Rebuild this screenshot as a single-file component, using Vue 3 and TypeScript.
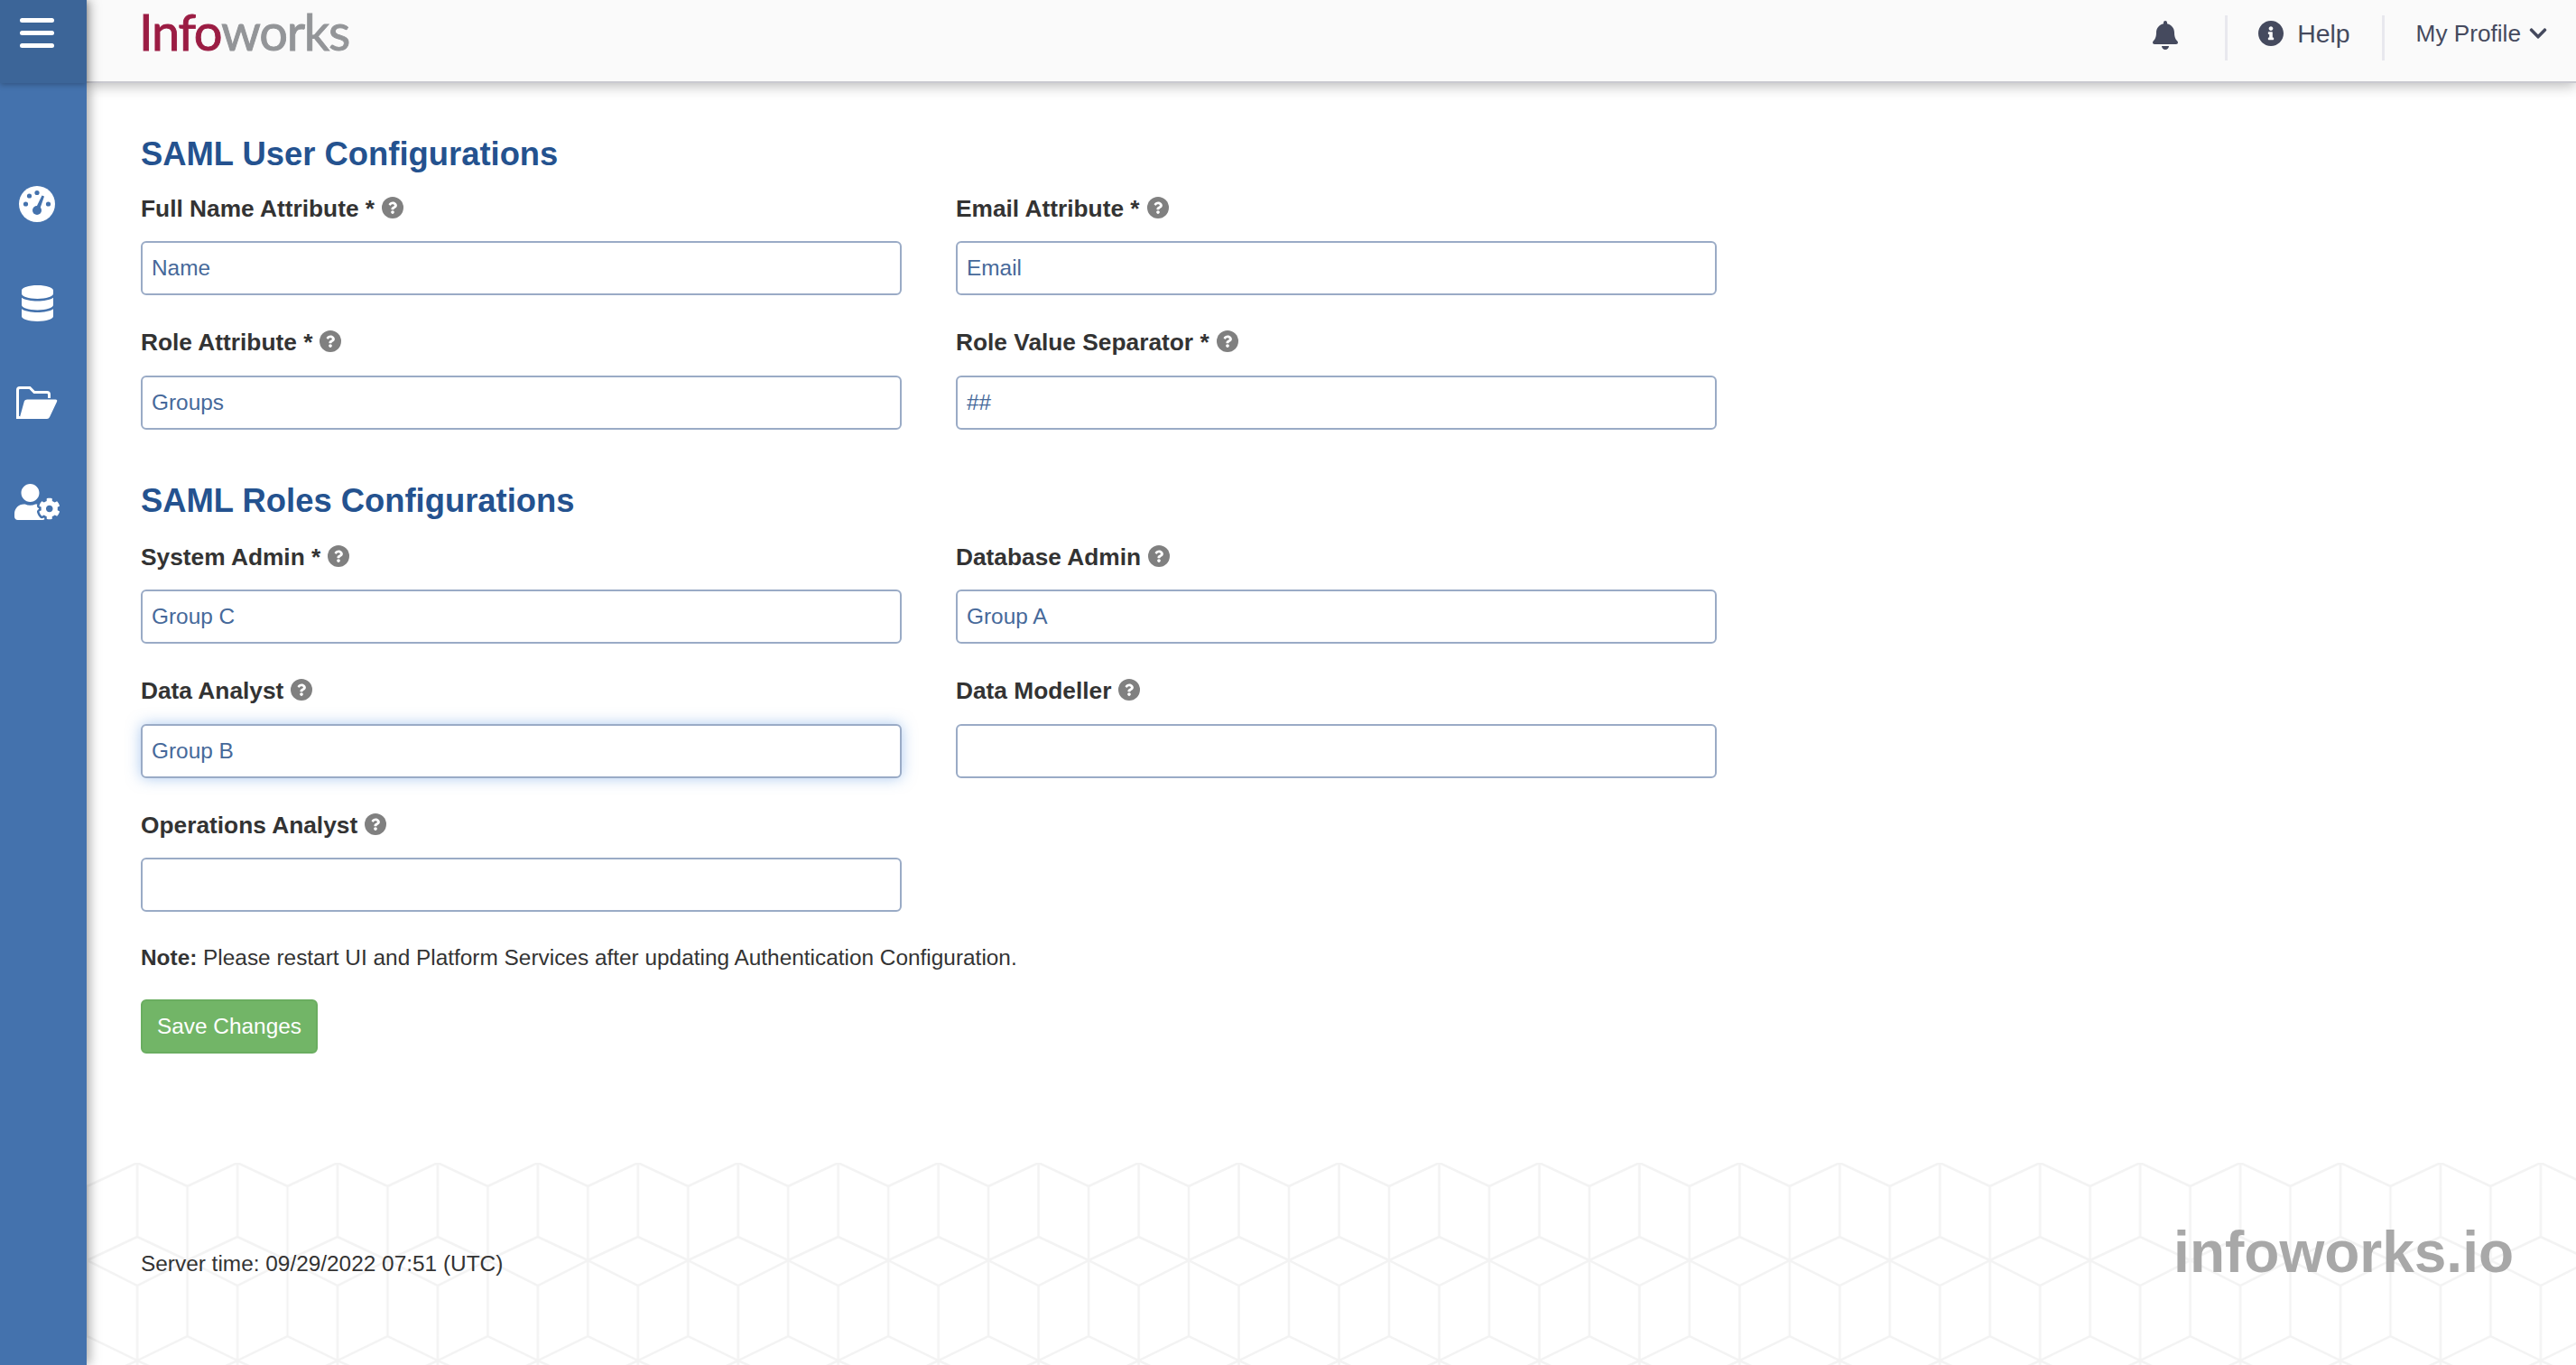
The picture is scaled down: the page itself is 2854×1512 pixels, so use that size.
<script setup lang="ts">
interface Field { label: string; required: boolean; value: string; focused?: boolean }
const userFields: Field[] = [
  { label: 'Full Name Attribute', required: true, value: 'Name' },
  { label: 'Email Attribute', required: true, value: 'Email' },
  { label: 'Role Attribute', required: true, value: 'Groups' },
  { label: 'Role Value Separator', required: true, value: '##' },
]
const roleFields: Field[] = [
  { label: 'System Admin', required: true, value: 'Group C' },
  { label: 'Database Admin', required: false, value: 'Group A' },
  { label: 'Data Analyst', required: false, value: 'Group B', focused: true },
  { label: 'Data Modeller', required: false, value: '' },
  { label: 'Operations Analyst', required: false, value: '' },
]
const sections = [
  { title: 'SAML User Configurations', fields: userFields },
  { title: 'SAML Roles Configurations', fields: roleFields },
]
const question = 'M262.655 90c-54.497 0-89.255 22.957-116.549 63.758-3.536 5.286-2.353 12.415 2.715 16.258l34.699 26.31c5.205 3.947 12.621 3.008 16.665-2.122 17.864-22.658 30.113-35.797 57.303-35.797 20.429 0 45.698 13.148 45.698 32.958 0 14.976-12.363 22.667-32.534 33.976C247.128 238.528 216 254.941 216 296v4c0 6.627 5.373 12 12 12h56c6.627 0 12-5.373 12-12v-1.333c0-28.462 83.186-29.647 83.186-106.667 0-58.002-60.165-102-116.531-102zM256 338c-25.365 0-46 20.635-46 46 0 25.364 20.635 46 46 46s46-20.636 46-46c0-25.365-20.635-46-46-46z'
</script>

<template>
  <div class="app">
    <aside class="sidebar">
      <div class="burger">
        <span></span><span></span><span></span>
      </div>
      <nav class="nav">
        <div class="nav-item">
          <svg width="40" height="40" viewBox="0 0 40 40">
            <circle cx="20" cy="20" r="20" fill="#fff" />
            <g fill="#4472ad">
              <circle cx="7.5" cy="20" r="2.6" />
              <circle cx="11.5" cy="11" r="2.6" />
              <circle cx="20" cy="7.5" r="2.6" />
              <circle cx="32.5" cy="20" r="2.6" />
              <circle cx="20" cy="27" r="5" />
              <path d="M18 26 L25.5 10.5 L28 11.5 L22.5 27.5 Z" />
            </g>
          </svg>
        </div>
        <div class="nav-item">
          <svg width="35" height="40" viewBox="0 0 448 512" fill="#fff">
            <path d="M448 73.143v45.714C448 159.143 347.667 192 224 192S0 159.143 0 118.857V73.143C0 32.857 100.333 0 224 0s224 32.857 224 73.143zM448 176v102.857C448 319.143 347.667 352 224 352S0 319.143 0 278.857V176c48.125 33.143 136.208 48.572 224 48.572S399.874 209.143 448 176zm0 160v102.857C448 479.143 347.667 512 224 512S0 479.143 0 438.857V336c48.125 33.143 136.208 48.572 224 48.572S399.874 369.143 448 336z" />
          </svg>
        </div>
        <div class="nav-item">
          <svg width="46" height="36" viewBox="0 0 46 36">
            <path d="M1.500 33V4Q1.500 1.500 4 1.500H15L20 6.500H34Q36.500 6.500 36.500 9V13" fill="none" stroke="#fff" stroke-width="3" />
            <path d="M1.500 33 V34.500 H4" fill="none" stroke="#fff" stroke-width="3" />
            <path d="M9 16Q10 14.500 12 14.500H43.500Q46 14.500 45 17L37 34Q36 36 34 36H5Q3 36 4 34Z" fill="#fff" />
          </svg>
        </div>
        <div class="nav-item">
          <svg width="50" height="40" viewBox="0 0 640 512" fill="#fff">
            <path d="M610.5 373.3c2.6-14.1 2.6-28.5 0-42.6l25.8-14.9c3-1.7 4.3-5.2 3.3-8.5-6.7-21.6-18.2-41.2-33.2-57.4-2.3-2.5-6-3.1-9-1.4l-25.8 14.9c-10.9-9.3-23.4-16.5-36.9-21.3v-29.8c0-3.4-2.4-6.4-5.7-7.1-22.3-5-45-4.8-66.2 0-3.3.7-5.7 3.7-5.7 7.1v29.8c-13.5 4.8-26 12-36.9 21.3l-25.8-14.9c-2.9-1.7-6.7-1.1-9 1.4-15 16.2-26.5 35.8-33.2 57.4-1 3.3.4 6.8 3.3 8.5l25.8 14.9c-2.6 14.1-2.6 28.5 0 42.6l-25.8 14.9c-3 1.7-4.3 5.2-3.3 8.5 6.7 21.6 18.2 41.1 33.2 57.4 2.3 2.5 6 3.1 9 1.4l25.8-14.9c10.9 9.3 23.4 16.5 36.9 21.3v29.8c0 3.4 2.4 6.4 5.7 7.1 22.3 5 45 4.8 66.2 0 3.3-.7 5.7-3.7 5.7-7.1v-29.8c13.5-4.8 26-12 36.9-21.3l25.8 14.9c2.9 1.7 6.7 1.1 9-1.4 15-16.2 26.5-35.8 33.2-57.4 1-3.3-.4-6.8-3.3-8.5l-25.8-14.9zM496 400.5c-26.8 0-48.5-21.8-48.5-48.5s21.8-48.5 48.5-48.5 48.5 21.8 48.5 48.5-21.7 48.5-48.5 48.5zM224 256c70.7 0 128-57.3 128-128S294.7 0 224 0 96 57.3 96 128s57.3 128 128 128zm201.2 226.5c-2.3-1.2-4.6-2.6-6.8-3.9l-7.9 4.6c-6 3.4-12.8 5.3-19.6 5.3-10.9 0-21.4-4.6-28.9-12.6-18.3-19.8-32.3-43.9-40.2-69.6-5.5-17.7 1.9-36.4 17.9-45.7l7.9-4.6c-.1-2.6-.1-5.2 0-7.8l-7.9-4.6c-16-9.2-23.4-28-17.9-45.7.9-2.9 2.2-5.8 3.2-8.7-3.8-.3-7.5-1.2-11.4-1.2h-16.7c-22.2 10.2-46.9 16-72.9 16s-50.6-5.8-72.9-16h-16.7C60.2 288 0 348.2 0 422.4V464c0 26.5 21.5 48 48 48h352c10.1 0 19.500-3.2 27.2-8.5-1.2-3.8-2-7.7-2-11.8v-9.2z" />
          </svg>
        </div>
      </nav>
    </aside>

    <div class="main">
      <header class="topbar">
        <div class="logo"><span class="logo-a">Info</span><span class="logo-b">works</span></div>
        <div class="top-right">
          <svg class="bell" width="28" height="32" viewBox="0 0 448 512" fill="#454a5e">
            <path d="M224 512c35.32 0 63.97-28.65 63.97-64H160.03c0 35.35 28.65 64 63.97 64zm215.39-149.71c-19.32-20.76-55.47-51.99-55.47-154.29 0-77.7-54.48-139.9-127.94-155.16V32c0-17.67-14.32-32-31.98-32s-31.98 14.33-31.98 32v20.84C118.56 68.1 64.08 130.3 64.08 208c0 102.3-36.15 133.53-55.47 154.29-6 6.45-8.66 14.16-8.61 21.71.11 16.4 12.98 32 32.1 32h383.8c19.12 0 32-15.6 32.1-32 .05-7.55-2.61-15.27-8.61-21.71z" />
          </svg>
          <i class="divider"></i>
          <div class="help">
            <svg width="28" height="28" viewBox="8 8 496 496" fill="#454a5e">
              <path d="M256 8C119.043 8 8 119.083 8 256c0 136.997 111.043 248 248 248s248-111.003 248-248C504 119.083 392.957 8 256 8zm0 110c23.196 0 42 18.804 42 42s-18.804 42-42 42-42-18.804-42-42 18.804-42 42-42zm56 254c0 6.627-5.373 12-12 12h-88c-6.627 0-12-5.373-12-12v-24c0-6.627 5.373-12 12-12h12v-64h-12c-6.627 0-12-5.373-12-12v-24c0-6.627 5.373-12 12-12h64c6.627 0 12 5.373 12 12v100h12c6.627 0 12 5.373 12 12v24z" />
            </svg>
            <span>Help</span>
          </div>
          <i class="divider"></i>
          <div class="profile">
            <span>My Profile</span>
            <svg width="20" height="22" viewBox="0 0 448 512" fill="#454a5e">
              <path d="M207.029 381.476L12.686 187.132c-9.373-9.373-9.373-24.569 0-33.941l22.667-22.667c9.357-9.357 24.522-9.375 33.901-.04L224 284.505l154.745-154.021c9.379-9.335 24.544-9.317 33.901.04l22.667 22.667c9.373 9.373 9.373 24.569 0 33.941L240.971 381.476c-9.373 9.372-24.569 9.372-33.942 0z" />
            </svg>
          </div>
        </div>
      </header>

      <main class="content">
        <section v-for="s in sections" :key="s.title" class="section">
          <h2 class="title">{{ s.title }}</h2>
          <div class="grid">
            <div v-for="f in s.fields" :key="f.label" class="field">
              <label class="label">
                <span>{{ f.label }}{{ f.required ? ' *' : '' }}</span>
                <svg class="q" width="24" height="24" viewBox="8 8 496 496">
                  <circle cx="256" cy="256" r="248" fill="#808080" />
                  <path :d="question" fill="#fff" transform="translate(256 256) scale(0.82) translate(-256 -256)" />
                </svg>
              </label>
              <input class="input" :class="{ focus: f.focused }" type="text" :value="f.value" />
            </div>
          </div>
        </section>
        <p class="note"><b>Note:</b> Please restart UI and Platform Services after updating Authentication Configuration.</p>
        <button class="save" type="button">Save Changes</button>
      </main>

      <footer class="footer">
        <svg class="hex" width="100%" height="224" aria-hidden="true">
          <defs>
            <pattern id="hexp" x="0.6" y="0" width="110.95" height="219" patternUnits="userSpaceOnUse">
              <path d="M0 26L55.5 0L110.95 26M55.500 0V82M0 26V192M110.95 26V192M0 108L55.5 82L110.95 108M0 108L55.5 136L110.95 108M55.500 136V219M0 192L55.5 219L110.95 192" fill="none" stroke="#f3f3f3" stroke-width="2.500" />
            </pattern>
          </defs>
          <rect width="100%" height="224" fill="url(#hexp)" />
        </svg>
        <span class="time">Server time: 09/29/2022 07:51 (UTC)</span>
        <span class="brand">infoworks.io</span>
      </footer>
    </div>
  </div>
</template>

<style>
html, body { margin: 0; background: #fff; }
</style>

<style scoped>
.app {
  display: flex;
  width: 2854px;
  height: 1512px;
  overflow: hidden;
  font-family: "Liberation Sans", Arial, sans-serif;
  color: #333;
}
.sidebar {
  width: 96px;
  flex: none;
  background: #4472ad;
  box-shadow: 3px 0 12px rgba(0, 0, 0, 0.35);
  position: relative;
  z-index: 3;
}
.burger {
  height: 92px;
  box-sizing: border-box;
  background: #3c6598;
  padding: 20px 0 0 22px;
  display: flex;
  flex-direction: column;
  gap: 9px;
  box-shadow: 0 2px 6px rgba(0, 0, 0, 0.25);
}
.burger span {
  display: block;
  width: 38px;
  height: 5px;
  border-radius: 3px;
  background: #fff;
}
.nav { padding-top: 79px; }
.nav-item {
  height: 110px;
  display: flex;
  align-items: center;
  justify-content: center;
  padding-right: 14px;
}
.main {
  flex: 1;
  min-width: 0;
  display: flex;
  flex-direction: column;
}
.topbar {
  height: 92px;
  flex: none;
  box-sizing: border-box;
  background: #fafafa;
  border-bottom: 2px solid #c9c9d0;
  box-shadow: 0 3px 14px rgba(0, 0, 0, 0.28);
  position: relative;
  z-index: 2;
  display: flex;
  align-items: flex-start;
  justify-content: space-between;
  padding-left: 58px;
}
.logo {
  font-family: Lato, sans-serif;
  font-size: 56px;
  line-height: 66px;
  letter-spacing: -1.300px;
  margin-top: 2px;
  -webkit-text-stroke: 0.9px currentColor;
}
.logo-a { color: #9b1c43; }
.logo-b { color: #939598; }
.top-right {
  display: flex;
  align-items: center;
  height: 74px;
  color: #454a5e;
  font-size: 27px;
}
.bell { margin-right: 52px; margin-top: 4px; margin-left: 1px; }
.divider {
  width: 3px;
  height: 50px;
  margin-top: 10px;
  background: #e8e8ee;
}
.help {
  display: flex;
  align-items: center;
  gap: 15px;
  margin-left: 34px;
  margin-right: 35px;
  font-size: 28.4px;
}
.profile {
  display: flex;
  align-items: center;
  gap: 9px;
  margin-left: 35px;
  margin-right: 32px;
  font-size: 26.2px;
}
.content {
  flex: 1;
  padding: 57px 0 0 60px;
}
.section + .section { margin-top: 57.5px; }
.title {
  margin: 0 0 20px;
  font-size: 36.4px;
  line-height: 44px;
  font-weight: 700;
  color: #24528f;
}
.section + .section .title { margin-bottom: 22px; }
.grid {
  display: grid;
  grid-template-columns: 843px 843px;
  column-gap: 60px;
  row-gap: 34.5px;
}
.label {
  display: flex;
  align-items: center;
  gap: 8px;
  height: 36px;
  margin-bottom: 18px;
  font-size: 26.3px;
  font-weight: 700;
  color: #333;
}
.q { margin-top: -3px; }
.input {
  display: block;
  width: 100%;
  height: 60px;
  box-sizing: border-box;
  border: 2px solid #9aabc6;
  border-radius: 6px;
  padding: 0 10px;
  font: 24.4px "Liberation Sans", Arial, sans-serif;
  color: #46699a;
  background: #fff;
  outline: none;
}
.input.focus {
  box-shadow: 0 0 16px rgba(90, 150, 225, 0.5);
}
.note {
  margin: 33px 0 28px;
  font-size: 24.4px;
  line-height: 36px;
  color: #333;
}
.save {
  display: block;
  width: 196px;
  height: 60px;
  box-sizing: border-box;
  background: #72b567;
  border: 2px solid #6aad60;
  border-radius: 6px;
  color: #fff;
  font: 24.4px "Liberation Sans", Arial, sans-serif;
  padding: 0;
}
.footer {
  height: 224px;
  flex: none;
  position: relative;
  display: flex;
  justify-content: space-between;
  align-items: flex-start;
  padding: 0 69px 0 60px;
}
.hex { position: absolute; left: 0; top: 0; }
.time {
  position: relative;
  margin-top: 94px;
  font-size: 24.4px;
  line-height: 36px;
  color: #333;
}
.brand {
  position: relative;
  margin-top: 63px;
  font-size: 64px;
  line-height: 72px;
  font-weight: 700;
  color: #a8a8a8;
}
</style>
